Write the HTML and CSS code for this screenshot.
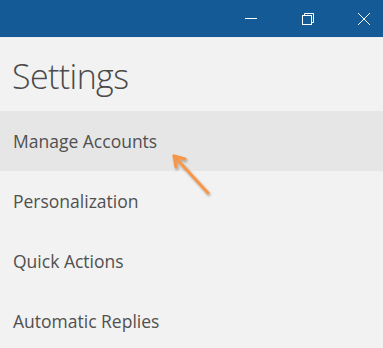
FILE: index.html
```html
<!DOCTYPE html>
<html lang="en">
<head>
    <meta charset="UTF-8">
    <title>Settings</title>
    <link rel="stylesheet" href="styles.css">
</head>
<body>
<div class="window">
    <div class="title-bar">
        <div class="win-btn min-btn">
            <svg width="12" height="12" viewBox="0 0 12 12"><path d="M0 5.5H12" stroke="#fff" stroke-width="1"/></svg>
        </div>
        <div class="win-btn restore-btn">
            <svg width="12" height="12" viewBox="0 0 12 12" fill="none" stroke="#fff" stroke-width="1">
                <rect x="0.5" y="2.5" width="9" height="9"/>
                <path d="M2.5 2.5V0.5H11.5V9.5H9.5"/>
            </svg>
        </div>
        <div class="win-btn close-btn">
            <svg width="12" height="12" viewBox="0 0 12 12"><path d="M0 0L12 12M12 0L0 12" stroke="#fff" stroke-width="1"/></svg>
        </div>
    </div>
    <h1 class="page-title">Settings</h1>
    <ul class="menu">
        <li class="active">Manage Accounts</li>
        <li>Personalization</li>
        <li>Quick Actions</li>
        <li>Automatic Replies</li>
    </ul>
    <svg class="arrow" width="60" height="60" viewBox="0 0 60 60">
        <defs>
            <filter id="sh" x="-50%" y="-50%" width="200%" height="200%">
                <feDropShadow dx="1" dy="1.5" stdDeviation="1.2" flood-color="#000" flood-opacity="0.35"/>
            </filter>
        </defs>
        <g filter="url(#sh)" stroke="#f79646" stroke-width="3" stroke-linecap="round" fill="none">
            <path d="M6 6L40 43"/>
            <path d="M6 6L17 9M6 6L8 17"/>
        </g>
    </svg>
</div>
</body>
</html>
```

FILE: styles.css
```css
*{
    margin: 0;
    padding: 0;
}
ul{
    list-style-type: none;
}
body{
    background-color: #f2f2f2;
    font-family: "Open Sans", "Noto Sans", sans-serif;
}
.window{
    position: relative;
    width: 383px;
    height: 348px;
    overflow: hidden;
}
.title-bar{
    height: 37px;
    background-color: #135a96;
    display: flex;
    justify-content: flex-end;
    border-bottom: 1px solid #e8edf2;
}
.win-btn{
    width: 57px;
    display: flex;
    align-items: center;
    justify-content: center;
}
.win-btn svg{
    display: block;
}
.restore-btn{
    margin-right: 9px;
}
.close-btn{
    width: 38px;
}
.page-title{
    font-weight: 300;
    font-size: 34px;
    letter-spacing: -0.6px;
    color: #4a4a4a;
    height: 73px;
    line-height: 76px;
    padding-left: 12px;
}
.menu li{
    height: 60px;
    line-height: 60px;
    padding-left: 13px;
    font-size: 17.5px;
    color: #505050;
}
.menu .active{
    background-color: #e6e6e6;
}
.arrow{
    position: absolute;
    left: 168px;
    top: 150px;
}
```
